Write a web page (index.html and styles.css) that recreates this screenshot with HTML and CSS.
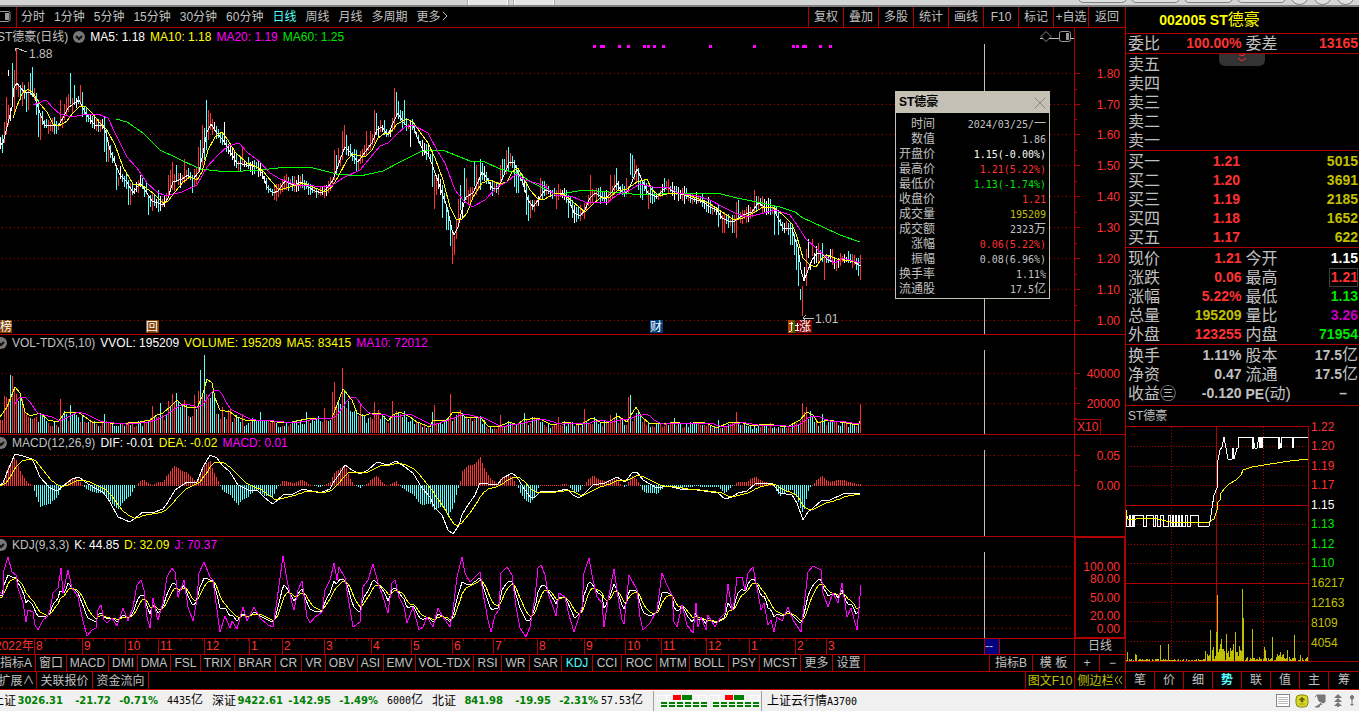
FILE: index.html
```html
<!DOCTYPE html>
<html lang="zh-CN">
<head>
    <meta charset="UTF-8">
    <title>ST德豪 002005</title>
    <link rel="stylesheet" href="styles.css">
</head>
<body>
<div class="app">
    <div class="titlebar">
        <span class="win-tab"></span><span class="win-tab"></span>
        <div class="win-buttons"><i></i><i></i><i></i><i></i><b></b><b></b><b></b></div>
    </div>

    <div class="workspace">
        <main class="left">
            <div class="toolbar">
                <svg class="dock-icon" width="17" height="20"><rect x="-3" y="4.5" width="13" height="10" rx="2" fill="none" stroke="#999"/><rect x="5" y="6" width="4" height="7" fill="#999"/></svg>
                <nav class="periods">
                    <button>分时</button><button>1分钟</button><button>5分钟</button><button>15分钟</button><button>30分钟</button><button>60分钟</button><button class="on">日线</button><button>周线</button><button>月线</button><button>多周期</button>
                    <button>更多<svg width="8" height="10"><path d="M2 1l4 4-4 4" fill="none" stroke="#c0c0c0"/></svg></button>
                </nav>
                <nav class="tools">
                    <button>复权</button><button>叠加</button><button>多股</button><button>统计</button><button>画线</button><button>F10</button><button>标记</button><button>+自选</button><button>返回</button>
                </nav>
            </div>

            <section class="panel">
                <div class="plot">
                    <div class="legend price-legend">
                        <span class="cut">ST德豪(日线)</span>
                        <svg class="fold" width="12" height="12"><circle cx="6" cy="6" r="6"/><path d="M3 5l3 3 3-3"/></svg>
                        <span class="white">MA5: 1.18</span><span class="yellow">MA10: 1.18</span><span class="magenta">MA20: 1.19</span><span class="green">MA60: 1.25</span>
                        <svg class="pin" width="34" height="12"><path d="M0 7.500h34" stroke="#c0c0c0"/><path d="M1 5.500l5-5 5 5-5 5z" fill="#000" stroke="#888"/><rect x="19.500" y=".5" width="11" height="10" rx="2" fill="#000" stroke="#999"/><rect x="26" y="2" width="3" height="7" fill="#999"/></svg>
                    </div>
                    <svg class="chart" id="price"></svg>
                </div>
                <div class="axis"><svg class="chart" id="priceAxis"></svg></div>
            </section>

            <section class="panel">
                <div class="plot">
                    <div class="legend">
                        <svg class="fold" width="7" height="12"><circle cx="1" cy="6" r="6"/><path d="M-2 5l3 3 3-3"/></svg>
                        <span>VOL-TDX(5,10)</span><span class="white">VVOL: 195209</span><span class="yellow">VOLUME: 195209</span><span class="yellow">MA5: 83415</span><span class="magenta">MA10: 72012</span>
                    </div>
                    <svg class="chart" id="vol"></svg>
                </div>
                <div class="axis"><svg class="chart" id="volAxis"></svg></div>
            </section>

            <section class="panel">
                <div class="plot">
                    <div class="legend">
                        <svg class="fold" width="7" height="12"><circle cx="1" cy="6" r="6"/><path d="M-2 5l3 3 3-3"/></svg>
                        <span>MACD(12,26,9)</span><span class="white">DIF: -0.01</span><span class="yellow">DEA: -0.02</span><span class="magenta">MACD: 0.01</span>
                    </div>
                    <svg class="chart" id="macd"></svg>
                </div>
                <div class="axis"><svg class="chart" id="macdAxis"></svg></div>
            </section>

            <section class="panel">
                <div class="plot">
                    <div class="legend">
                        <svg class="fold" width="7" height="12"><circle cx="1" cy="6" r="6"/><path d="M-2 5l3 3 3-3"/></svg>
                        <span>KDJ(9,3,3)</span><span class="white">K: 44.85</span><span class="yellow">D: 32.09</span><span class="magenta">J: 70.37</span>
                    </div>
                    <svg class="chart" id="kdj"></svg>
                </div>
                <div class="axis active"><svg class="chart" id="kdjAxis"></svg></div>
            </section>

            <div class="timeline">
                <div class="months">
                    <span class="year">2022年</span><span>8</span><span>9</span><span>10</span><span>11</span><span>12</span><span>1</span><span>2</span><span>3</span><span>4</span><span>5</span><span>6</span><span>7</span><span>8</span><span>9</span><span>10</span><span>11</span><span>12</span><span>1</span><span>2</span><span>3</span>
                    <b class="cursor-date">--</b>
                </div>
                <button class="unit">日线</button>
            </div>

            <div class="row indicators">
                <nav class="ind-list">
                    <button class="cut">指标A</button><button>窗口</button><button>MACD</button><button>DMI</button><button>DMA</button><button>FSL</button><button>TRIX</button><button>BRAR</button><button>CR</button><button>VR</button><button>OBV</button><button>ASI</button><button>EMV</button><button>VOL-TDX</button><button>RSI</button><button>WR</button><button>SAR</button><button class="on">KDJ</button><button>CCI</button><button>ROC</button><button>MTM</button><button>BOLL</button><button>PSY</button><button>MCST</button><button>更多</button><button>设置</button>
                </nav>
                <nav class="ind-right"><button>指标B</button><button>模 板</button><button>+</button><button>−</button></nav>
            </div>
            <div class="row extras">
                <nav class="ext-list"><button class="cut">扩展∧</button><button>关联报价</button><button>资金流向</button></nav>
                <nav class="ext-right"><button>图文F10</button><button>侧边栏<svg width="9" height="10"><path d="M4 1L1 5l3 4M8 1L5 5l3 4" fill="none" stroke="#c0c000"/></svg></button></nav>
            </div>
        </main>

        <aside class="side">
            <h1>002005 ST<em>德豪</em></h1>
            <table class="quote single">
                <tr><th>委比</th><td class="red">100.00%</td><th>委差</th><td class="red">13165</td></tr>
            </table>
            <div class="asks">
                <button class="expand" aria-label="展开"><svg width="10" height="9"><path d="M2 1h2l1 1 1-1h2M1 4l4 3 4-3" fill="none" stroke="#ff3232"/></svg></button>
                <table class="quote">
                    <tr><th>卖五</th><td></td><td></td></tr>
                    <tr><th>卖四</th><td></td><td></td></tr>
                    <tr><th>卖三</th><td></td><td></td></tr>
                    <tr><th>卖二</th><td></td><td></td></tr>
                    <tr><th>卖一</th><td></td><td></td></tr>
                </table>
            </div>
            <table class="quote bids">
                <tr><th>买一</th><td class="red">1.21</td><td class="gold">5015</td></tr>
                <tr><th>买二</th><td class="red">1.20</td><td class="gold">3691</td></tr>
                <tr><th>买三</th><td class="red">1.19</td><td class="gold">2185</td></tr>
                <tr><th>买四</th><td class="red">1.18</td><td class="gold">1652</td></tr>
                <tr><th>买五</th><td class="red">1.17</td><td class="gold">622</td></tr>
            </table>
            <table class="quote">
                <tr><th>现价</th><td class="red">1.21</td><th>今开</th><td class="white">1.15</td></tr>
                <tr><th>涨跌</th><td class="red">0.06</td><th>最高</th><td class="red"><span class="boxed">1.21</span></td></tr>
                <tr><th>涨幅</th><td class="red">5.22%</td><th>最低</th><td class="green">1.13</td></tr>
                <tr><th>总量</th><td class="gold">195209</td><th>量比</th><td class="purple">3.26</td></tr>
                <tr><th>外盘</th><td class="red">123255</td><th>内盘</th><td class="green">71954</td></tr>
            </table>
            <table class="quote last">
                <tr><th>换手</th><td>1.11%</td><th>股本</th><td>17.5<em>亿</em></td></tr>
                <tr><th>净资</th><td>0.47</td><th>流通</th><td>17.5<em>亿</em></td></tr>
                <tr><th>收益㊂</th><td>-0.120</th><th><b>PE</b>(动)</th><td class="none">–</td></tr>
            </table>
            <div class="mini-title">ST德豪</div>
            <svg class="chart mini" id="mini"></svg>
            <nav class="side-tabs"><button>笔</button><button>价</button><button>细</button><button class="on">势</button><button>联</button><button>值</button><button>主</button><button>筹</button></nav>
        </aside>

        <div class="tip">
            <header><b>ST德豪</b><button aria-label="关闭"><svg width="12" height="12"><path d="M.5.5l11 11M11.500.5l-11 11" stroke="#888"/></svg></button></header>
            <table>
                <tr><th>时间</th><td>2024/03/25/<em>一</em></td></tr>
                <tr><th>数值</th><td>1.86</td></tr>
                <tr><th>开盘价</th><td class="white">1.15(-0.00%)</td></tr>
                <tr><th>最高价</th><td class="red">1.21(5.22%)</td></tr>
                <tr><th>最低价</th><td class="green">1.13(-1.74%)</td></tr>
                <tr><th>收盘价</th><td class="red">1.21</td></tr>
                <tr><th>成交量</th><td class="gold">195209</td></tr>
                <tr><th>成交额</th><td>2323<em>万</em></td></tr>
                <tr><th>涨幅</th><td class="red">0.06(5.22%)</td></tr>
                <tr><th>振幅</th><td>0.08(6.96%)</td></tr>
                <tr><th>换手率</th><td>1.11%</td></tr>
                <tr><th>流通股</th><td>17.5<em>亿</em></td></tr>
            </table>
        </div>
    </div>

    <footer class="status">
        <div class="index first"><span>上证</span><b>3026.31</b><b>-21.72</b><b>-0.71%</b><span class="amt">4435<em>亿</em></span></div>
        <div class="index"><span>深证</span><b>9422.61</b><b>-142.95</b><b>-1.49%</b><span class="amt">6000<em>亿</em></span></div>
        <div class="index"><span>北证</span><b>841.98</b><b>-19.95</b><b>-2.31%</b><span class="amt">57.53<em>亿</em></span></div>
        <svg class="lights" width="109" height="20">
            <g id="light">
                <rect x="3.500" y="4.500" width="49" height="5" fill="#f0f0f0" stroke="#fff"/>
                <path d="M12.500 4v6M44.500 4v6" stroke="#fff"/>
                <rect x="19" y="4" width="8" height="5" fill="#f00"/><rect x="28" y="4" width="10" height="5" fill="#008000"/>
                <path d="M7 12h46M7 15h46" stroke="#008000" stroke-width="2" stroke-dasharray="6 2"/>
            </g>
            <use href="#light" x="52"/>
        </svg>
        <span class="server">上证云行情<em>A3700</em></span>
        <div class="tray">
            <svg width="14" height="14"><rect x=".5" y=".5" width="13" height="12" fill="#fff" stroke="#888"/><path d="M2 3.500h10M2 5.500h10M2 7.500h10M2 9.500h10" stroke="#bbb"/></svg>
            <svg width="14" height="14"><rect x="1" y="1" width="12" height="12" rx="4" fill="#d8d830" stroke="#880"/><path d="M7 3l3 3H8v2H6V6H4zM4 10h6" fill="#660" stroke="#660" stroke-width=".5"/></svg>
            <svg width="14" height="14"><path d="M3 1h8v7l-2 1-4-2zM6 9l2 2M1 13h4l2-4M3 1L1 3" fill="#777" stroke="#777"/></svg>
            <svg width="10" height="14"><path d="M5 0l4 4H1zM5 4l4 4H1zM5 8l4 4H1zM4 11h2v2H4z" fill="#777"/></svg>
            <svg width="8" height="14"><path d="M4 1l2 2-2 3-2-3zM4 6v3M3 10h2v1H3z" fill="#777" stroke="#777"/></svg>
        </div>
    </footer>
</div>
<script src="script.js"></script>
</body>
</html>
```
FILE: styles.css
```css
* {
    box-sizing: border-box;
}

body {
    margin: 0;
    background: #000;
    color: #c0c0c0;
    font: 12px/15px "Liberation Sans", "Noto Sans CJK SC", sans-serif;
    overflow: hidden;
}

button {
    padding: 0;
    border: 0;
    background: none;
    color: inherit;
    font: inherit;
    white-space: nowrap;
    cursor: pointer;
}

em { font-style: normal; }
.white { color: #fff; }
.yellow { color: #ff0; }
.magenta { color: #f0f; }
.green { color: #00e600; }
.red { color: #ff3232; }
.gold { color: #c0c000; }
.purple { color: #c000c0; }
.on { color: #54ffff; }

.app {
    display: flex;
    flex-direction: column;
    height: 100vh;
}

/* 顶部窗口边 */
.titlebar {
    display: flex;
    flex: none;
    gap: 6px;
    height: 7px;
    padding-left: 468px;
    overflow: hidden;
    background: #d4d4d4;
    border-bottom: 2px solid #808080;
}

.win-tab {
    width: 40px;
    background: #e4e4e4;
    border: solid #fff;
    border-width: 0 1px;
    outline: 1px solid #aaa;
}

.win-buttons {
    display: flex;
    gap: 4px;
    margin: -14px 4px 0 auto;
}

.win-buttons i, .win-buttons b {
    width: 49px;
    height: 17px;
    border: 1px solid #808080;
    border-radius: 5px;
    background: #e0e0e0;
}

.win-buttons b {
    width: 19px;
    height: 19px;
    border-radius: 50%;
}

.workspace {
    position: relative;
    display: grid;
    grid-template-columns: minmax(0, 1fr) 234px;
    grid-template-rows: minmax(0, 1fr);
    flex: 1;
    min-height: 0;
}

.left {
    display: grid;
    grid-template-rows: 21px minmax(0, 1fr) 100px 102px 102px 16px 17px 18px;
    min-width: 0;
}

.left > * {
    border-bottom: 1px solid #b00000;
}

.toolbar {
    display: flex;
    line-height: 20px;
}

.dock-icon { border-right: 1px solid #b00000; }

.periods {
    display: flex;
    gap: 9px;
    padding-left: 4px;
}

.tools {
    display: flex;
    margin-left: auto;
}

.tools button {
    width: 35px;
    border-left: 1px solid #b00000;
}

.tools button:last-child { width: 37px; }

/* 图表面板 */
.panel {
    display: grid;
    grid-template-columns: minmax(0, 1fr) 51px;
    grid-template-rows: minmax(0, 1fr);
    min-height: 0;
}

.plot {
    display: flex;
    flex-direction: column;
    min-width: 0;
    min-height: 0;
}

.legend {
    display: flex;
    flex: none;
    align-items: center;
    gap: 5px;
    height: 16px;
    white-space: nowrap;
}

.price-legend { height: 18px; }
.cut { margin-left: -3px; }
.fold circle { fill: #777; }
.fold path { fill: none; stroke: #111; stroke-width: 2; }
.pin { margin-left: auto; }

.axis {
    display: flex;
    min-height: 0;
    border-left: 1px solid #b00000;
}

.axis.active {
    margin: -1px -1px -1px 0;
    border: 2px solid #b00000;
}

.chart {
    display: block;
    flex: 1;
    width: 100%;
    min-width: 0;
    min-height: 0;
    overflow: visible;
    shape-rendering: crispEdges;
}

.chart polyline, .chart path { fill: none; stroke-width: 1; }
.chart text { font-size: 12px; fill: #ff3232; }
.s-white { stroke: #fff; }
.s-yellow { stroke: #ff0; }
.s-magenta { stroke: #f0f; }
.s-green { stroke: #0f0; }
.s-up { stroke: #ff3232; }
.s-down { stroke: #54ffff; }
.s-gold { stroke: #c0c000; }
.s-frame { stroke: #b00000; }
.s-grid { stroke: #b00000; stroke-dasharray: 1 3; }
.s-dense { stroke: #b00000; stroke-dasharray: 1 1; }
.s-dots { stroke: #b00000; stroke-dasharray: 1 2; }
.s-cross { stroke: #c0c0c0; }
.chart .t-white { fill: #fff; }
.chart .t-green { fill: #00e600; }
.chart .t-gold { fill: #c0c000; }
.chart .t-grey { fill: #c0c0c0; }

.timeline {
    display: grid;
    grid-template-columns: minmax(0, 1fr) 51px;
}

.months {
    position: relative;
    display: grid;
    grid-template-columns: 34px 48px 43px 33px 46px 45px 33px 42px 47px 40px 41px 41px 44px 47px 41px 36px 45px 43px 46px 31px 1fr;
    color: #ff3232;
}

.months span {
    padding-left: 1px;
    border-left: 1px solid #b00000;
    background: repeating-linear-gradient(90deg, transparent 0 10px, #b00000 10px 11px) 0 0 / 100% 2px no-repeat;
    white-space: nowrap;
}

.months span:nth-child(21) { background: none; }

.months .year {
    margin-left: -5px;
    padding-left: 0;
    border: 0;
    background: none;
}

.cursor-date {
    position: absolute;
    top: 0;
    left: 984px;
    width: 16px;
    height: 15px;
    border: solid #b00000;
    border-width: 0 1px;
    background: #000080;
    color: #c0c0c0;
    font-weight: normal;
}

.unit { border-left: 1px solid #b00000; }

.row {
    display: flex;
    justify-content: space-between;
}

.row nav { display: grid; line-height: 16px; }
.row nav button { border-right: 1px solid #b00000; }
.row .ind-list { grid-template-columns: 36px 31px 42px 29px 33px 30px 34px 41px 26px 24px 32px 26px 32px 58px 28px 28px 32px 31px 29px 35px 33px 39px 31px 41px 32px 32px; }
.row .ind-right { grid-template-columns: 43px 42px 25px 25px; border-left: 1px solid #b00000; }
.row .ext-list { grid-template-columns: 37px 56px 56px; }
.row .ext-right { grid-template-columns: 49px 50px; border-left: 1px solid #b00000; color: #c0c000; }
.row nav.ind-right button:last-child, .row nav.ext-right button:last-child { border-right: 0; }

/* 右侧行情 */
.side {
    display: flex;
    flex-direction: column;
    min-width: 0;
    border-left: 1px solid #b00000;
    border-bottom: 1px solid #b00000;
}

.side > * { flex: none; }

.side h1 {
    height: 27px;
    margin: 0;
    padding: 0 66px 0 0;
    border-bottom: 1px solid #b00000;
    color: #ff0;
    font-size: 14px;
    line-height: 26px;
    text-align: center;
}

.side h1 em { font-size: 16px; font-weight: normal; }

.quote {
    width: 100%;
    table-layout: fixed;
    border-collapse: separate;
    border-spacing: 0;
    padding-top: 1px;
    border-bottom: 1px solid #b00000;
    line-height: 19px;
}

.quote th, .quote td { padding: 0; height: 19px; vertical-align: middle; white-space: nowrap; }
.quote th { width: 44px; padding-left: 2px; font-size: 16px; font-weight: normal; text-align: left; }
.quote td { padding-right: 1px; font-size: 14px; font-weight: bold; text-align: right; }
.quote td em { font-size: 16px; font-weight: normal; line-height: 16px; }
.quote th b { font-size: 14px; line-height: 16px; }
.quote th:nth-child(3) { padding-left: 3px; }
.asks td:nth-child(2), .bids td:nth-child(2) { width: 71px; }
.quote.single { padding-top: 0; }
.quote.last { height: 61px; padding-bottom: 2px; }
.quote td.none { padding-right: 12px; }
.boxed { display: inline-block; padding-left: 2px; outline: 1px solid #404040; outline-offset: -1px; }
.asks { position: relative; }

.expand {
    position: absolute;
    top: 0;
    left: 93px;
    display: flex;
    justify-content: center;
    width: 46px;
    height: 12px;
    border-radius: 0 0 6px 6px;
    background: #333;
}

.mini-title { height: 20px; padding-left: 2px; line-height: 20px; }
.side .mini { flex: 1; }

.side-tabs {
    display: grid;
    grid-template-columns: repeat(7, 29px) 1fr;
    height: 18px;
    border-top: 1px solid #b00000;
    line-height: 17px;
}

.side-tabs button { border-right: 1px solid #b00000; }
.side-tabs button:last-child { border: 0; }
.side-tabs .on { font-weight: bold; }

/* 十字光标浮窗 */
.tip {
    position: absolute;
    top: 84px;
    right: 309px;
    width: 155px;
    padding-bottom: 1px;
    border: 1px solid #c4c0b4;
    background: #000;
}

.tip header {
    display: flex;
    align-items: center;
    justify-content: space-between;
    height: 21px;
    margin-bottom: 4px;
    padding: 0 3px;
    background: #c4c0b4;
    color: #000;
}

.tip button { height: 12px; line-height: 12px; }
.tip table { width: 100%; border-spacing: 0; line-height: 15px; }
.tip th, .tip td { height: 15px; padding: 0; text-align: right; }
.tip th { width: 39px; font-weight: normal; }
.tip td { padding-right: 3px; font-family: "DejaVu Sans Mono", "Noto Sans CJK SC", monospace; font-size: 10px; }
.tip td em { font-family: "Noto Sans CJK SC", sans-serif; font-size: 12px; line-height: 12px; }

.status {
    display: flex;
    flex: none;
    height: 21px;
    overflow: hidden;
    border-top: 1px solid #fff;
    background: #f0f0f0;
    color: #000;
    line-height: 20px;
    white-space: nowrap;
}

.index {
    display: grid;
    grid-template-columns: 24px 47px 48px 47px 45px;
    width: 220px;
    text-align: right;
}

.index.first { margin-left: -8px; }
.index b { color: #008000; font: bold 10px/20px "DejaVu Sans", sans-serif; }
.amt, .server em { font-family: "DejaVu Sans Mono", monospace; font-size: 10px; }
.amt em { font-family: "Noto Sans CJK SC", sans-serif; font-size: 12px; line-height: 12px; }
.lights { flex: none; margin-left: 1px; border: solid #a0a0a0; border-width: 0 1px; shape-rendering: crispEdges; }
.server { padding-left: 5px; }

.tray {
    display: flex;
    align-items: center;
    gap: 5px;
    margin-left: auto;
    padding-right: 3px;
}
```
FILE: script.js
```js
const NS = 'http://www.w3.org/2000/svg';

// 走势关键点: "x,y x,y ..."
const MA5 = '0,145 3,143 7,127 12,107 14,88 17,83 20,87 25,93 30,92 35,98 40,113 45,126 52,125 58,126 63,118 68,108 73,104 79,100 83,108 88,117 95,125 103,125 106,133 110,150 115,163 120,175 127,182 133,193 140,183 145,190 152,201 158,203 163,205 168,198 173,182 182,179 188,175 193,179 199,172 203,153 207,132 211,124 217,133 225,143 232,155 237,163 247,165 257,167 262,173 267,187 273,193 278,191 285,181 293,185 302,182 308,187 315,191 322,193 328,187 333,180 340,160 345,147 350,152 358,162 365,152 372,143 377,130 382,127 388,135 393,123 398,113 403,122 408,127 413,125 417,137 423,150 428,154 433,167 440,187 447,207 452,230 454,235 458,227 462,210 466,197 473,193 478,182 482,172 487,178 492,188 498,189 503,177 509,163 514,162 518,173 523,183 528,200 533,207 538,200 545,190 553,193 563,193 570,203 574,213 580,216 585,210 590,198 595,193 605,199 612,192 617,183 622,192 627,192 632,182 637,169 642,180 648,193 657,197 663,190 668,187 675,193 685,195 693,199 703,202 710,207 717,210 722,218 730,222 735,221 743,215 752,212 758,203 765,207 773,207 778,218 783,228 792,229 795,239 798,247 801,270 804,281 808,270 812,260 817,253 822,254 828,260 835,263 843,258 852,261 861,266';
const MA10 = '13,118 17,106 22,94 28,89 33,93 40,104 47,112 53,124 59,126 67,121 73,113 80,106 85,106 92,113 100,123 107,130 115,145 123,167 133,184 143,186 153,193 163,203 168,201 175,192 183,182 190,177 197,180 202,172 208,150 215,137 222,132 228,140 235,152 247,163 257,167 263,171 272,182 279,190 290,187 303,183 313,187 325,192 332,187 338,177 347,160 353,154 365,157 372,150 378,138 385,133 390,133 397,124 407,119 413,122 420,132 428,143 435,158 443,180 450,207 456,219 462,219 467,213 473,197 482,183 490,180 500,184 507,182 512,172 518,168 523,177 530,190 538,199 545,199 555,193 565,195 573,202 585,212 592,205 600,198 610,197 617,191 627,189 637,182 647,179 652,190 660,196 670,193 683,194 697,198 710,204 722,212 734,220 743,218 753,213 763,207 773,207 783,215 792,224 797,237 803,258 810,265 816,267 822,258 827,255 837,259 850,261 860,263';
const MA20 = '33,105 46,100 53,108 60,114 72,117 82,115 98,114 108,118 115,133 127,157 137,168 147,183 157,192 166,196 182,192 197,185 207,167 217,156 228,146 239,143 247,152 260,162 270,173 280,179 297,185 330,187 343,178 360,170 370,158 380,146 388,143 397,134 405,127 413,125 428,133 438,152 445,163 455,190 463,200 472,207 485,200 497,187 507,182 516,174 525,180 543,185 555,195 573,197 585,202 607,203 617,195 630,190 640,184 657,188 668,187 678,193 697,196 710,200 723,207 735,213 747,217 760,214 775,210 790,215 797,225 806,239 817,249 825,256 835,263 843,258 860,263';
const MA60 = '116,119 127,122 143,133 160,150 177,158 200,169 227,172 260,170 287,167 313,168 337,174 360,176 383,171 400,162 420,152 430,150 445,151 470,161 485,162 500,169 517,173 533,183 553,193 567,193 583,190 597,191 620,193 643,195 673,193 717,193 737,198 757,202 780,207 795,212 803,218 823,227 840,235 860,242';
const VMA5 = '0,417 7,407 15,387 20,393 25,412 30,416 40,413 48,420 58,422 65,412 78,412 85,417 92,422 103,422 117,424 140,422 150,420 157,415 163,413 170,407 177,400 182,405 187,407 197,408 202,397 207,379 212,383 215,398 220,410 230,412 237,417 245,420 263,420 277,422 293,422 310,418 332,418 337,405 343,389 352,400 357,413 363,416 372,413 380,413 388,421 393,415 400,412 410,417 417,422 430,427 433,420 447,420 452,413 460,412 465,417 480,417 488,426 497,427 510,422 517,425 523,420 538,418 550,424 557,424 567,422 580,425 592,418 600,422 607,423 618,416 627,422 630,417 636,407 642,417 650,424 670,423 677,422 683,424 703,422 717,428 730,422 740,422 752,426 767,424 787,427 800,420 807,412 813,415 818,423 827,420 840,422 858,425 860,421';
const DIF = '0,485 3,483 8,470 15,454 23,456 32,459 35,465 40,477 50,488 57,491 63,486 72,479 79,477 85,482 95,488 103,492 110,502 118,517 130,522 143,512 152,513 163,509 168,502 175,490 187,482 197,482 203,467 210,455 217,458 222,465 230,472 238,485 248,490 257,490 265,498 273,504 283,495 293,494 303,489 320,493 330,489 333,483 340,473 345,465 352,470 360,474 368,470 377,462 388,465 396,461 405,467 413,473 422,488 430,497 435,508 442,515 448,530 453,534 459,525 462,515 468,505 475,495 480,483 488,484 497,485 503,478 512,473 517,477 523,487 530,497 535,497 540,492 558,491 567,489 573,495 579,498 585,493 593,485 605,483 617,477 625,482 632,473 637,472 643,480 657,488 668,486 680,489 697,490 718,493 725,499 732,497 738,493 747,491 755,484 772,483 780,493 792,495 797,503 803,520 808,512 813,508 822,500 830,500 843,494 860,493';
const J = '0,592 3,595 4,570 8,557 12,572 16,575 18,588 23,603 26,622 28,610 33,612 35,625 38,630 43,620 47,617 50,610 53,593 58,588 61,568 63,593 68,570 72,588 78,597 82,617 87,636 92,630 96,628 98,610 101,605 104,620 107,623 112,618 117,626 123,608 128,621 133,607 137,585 141,580 144,590 147,617 150,628 153,598 157,617 158,620 163,603 167,577 172,568 175,572 178,597 184,580 188,607 193,621 197,600 199,573 204,562 210,577 213,580 216,603 220,632 225,616 230,628 232,621 237,629 243,607 247,621 254,607 260,618 268,625 273,627 277,600 283,556 287,580 292,603 294,610 298,590 302,581 307,617 310,623 315,617 322,612 325,590 330,580 334,563 337,580 339,567 345,578 349,603 353,627 360,622 363,587 368,580 373,564 378,583 383,597 388,613 392,583 395,580 399,597 404,607 407,623 413,607 419,630 423,627 427,617 433,627 438,608 443,617 450,627 453,610 457,577 462,557 465,573 470,582 480,572 483,593 488,620 491,632 495,615 499,610 501,573 507,567 512,575 516,607 520,628 526,637 530,627 535,597 538,568 541,565 545,575 548,593 553,607 556,616 559,593 565,597 569,615 574,632 578,620 582,607 584,573 589,558 593,580 597,597 602,603 604,627 608,600 614,569 618,597 622,620 624,624 629,575 637,590 640,617 643,630 650,623 657,610 662,573 667,585 672,595 674,622 677,627 682,605 687,625 693,633 696,603 698,627 701,617 706,630 708,615 715,627 720,618 725,613 728,584 732,610 734,603 737,577 742,577 745,590 748,573 753,567 758,593 761,610 764,603 768,625 771,620 774,632 777,617 782,621 788,607 793,620 801,632 805,597 808,572 813,566 821,570 823,593 828,607 833,593 838,603 842,583 847,617 851,608 857,630 861,585';

// 长影线: x 上 下 颜色，其余按均线取
const SPIKES = '2 135 153 c,4 122 143 r,6 97 134 r,8 105 125 r,12 63 97 c,14 70 115 r,16 48 90 r,18 85 97 r,20 85 100 c,22 82 106 r,26 93 112 c,28 82 110 r,30 73 95 c,32 67 97 c,34 88 100 r,36 93 115 c,38 100 137 c,40 113 140 r,60 100 123 r,64 104 120 r,66 97 115 r,68 94 112 r,70 73 104 c,74 85 105 c,80 85 105 r,82 92 117 c,104 117 152 c,106 130 162 c,108 140 162 r,116 165 190 c,118 177 186 r,128 180 205 c,130 183 205 r,148 195 215 c,152 193 211 r,158 190 212 c,168 175 197 r,170 170 192 r,172 162 190 r,176 165 182 c,184 159 183 r,192 175 193 c,198 147 172 r,200 140 170 c,202 125 165 r,204 128 160 c,206 100 150 c,208 110 140 r,210 113 130 r,212 119 135 r,224 122 145 w,242 147 165 r,334 150 180 r,336 155 175 c,338 148 167 r,342 131 160 r,344 125 150 r,346 135 155 c,356 150 172 c,366 131 155 r,370 131 150 r,374 110 143 r,376 113 135 c,384 120 135 c,394 88 130 r,396 92 115 c,398 101 119 c,404 100 125 c,410 120 147 w,432 150 187 c,434 175 209 r,436 178 195 r,442 185 218 c,446 205 230 c,448 210 230 c,450 220 246 c,452 233 264 r,454 236 255 r,456 220 239 r,458 199 225 r,460 185 210 c,464 168 200 c,466 178 200 r,474 162 186 c,476 165 195 r,480 159 190 c,482 163 180 c,500 165 185 r,502 159 180 c,504 159 175 c,506 150 174 r,508 147 170 c,510 153 166 r,512 156 168 c,514 160 187 c,516 165 193 c,518 168 193 c,526 185 215 c,528 195 221 c,530 200 218 r,540 178 200 r,542 181 200 c,544 181 196 c,556 190 209 r,558 184 200 r,568 195 218 c,572 200 218 c,574 205 223 w,580 205 221 r,590 175 205 r,610 175 200 r,614 175 195 r,616 168 190 c,626 178 195 r,630 153 175 c,632 155 178 c,634 159 180 r,636 165 182 r,638 168 190 c,640 180 198 c,642 182 200 c,648 190 209 r,664 178 192 c,718 205 227 c,722 215 233 r,724 212 233 r,732 215 233 c,734 215 233 r,736 202 238 r,738 200 220 c,754 190 213 r,756 196 212 c,762 196 213 r,774 205 235 c,778 210 235 c,790 222 245 c,792 225 245 c,794 234 255 c,796 240 270 c,798 255 286 c,800 289 300 c,802 286 316 r,804 267 281 w,806 249 286 r,808 239 258 w,812 239 256 r,818 243 262 r,822 243 262 c,824 255 280 r,830 249 262 w,832 249 265 r,856 258 270 c,858 258 276 c,860 255 280 r';
const VOL_SPIKES = '4 396 r,6 397 r,8 399 r,10 403 c,11 375 c,13 376 r,15 390 r,60 399 r,70 405 c,104 414 c,153 406 r,161 403 c,168 401 r,172 394 r,176 393 c,184 400 r,194 395 r,199 391 r,201 370 c,205 355 c,207 394 r,211 398 c,222 407 r,242 414 r,261 412 c,306 412 c,325 408 r,333 392 r,335 382 r,339 402 c,343 368 r,345 392 c,360 403 r,374 402 r,393 401 r,432 412 c,434 405 r,451 394 r,500 415 r,525 413 c,558 417 r,585 409 r,610 415 r,616 413 c,629 397 r,631 395 c,641 414 c,674 418 c,719 420 c,736 412 r,802 403 r,804 412 r,806 407 r,823 414 c,860 404 r';

// 固定种子的随机数，保证每次画出来一样
let seed = 7;
function rnd() {
    seed = (seed * 16807) % 2147483647;
    return seed / 2147483647;
}

function parse(str) {
    return str.split(' ').map(p => p.split(',').map(Number));
}

function at(pts, x) {
    let i = 1;
    while (i < pts.length - 1 && pts[i][0] < x) i++;
    const [x0, y0] = pts[i - 1], [x1, y1] = pts[i];
    return y0 + (y1 - y0) * (x - x0) / (x1 - x0);
}

function add(g, tag, attrs, text) {
    const el = document.createElementNS(NS, tag);
    for (const k in attrs) el.setAttribute(k, attrs[k]);
    if (text !== undefined) el.textContent = text;
    g.appendChild(el);
    return el;
}

function layer(id, top, left) {
    return add(document.getElementById(id), 'g', {transform: `translate(${-(left || 0)},${-top})`});
}

function line(g, pts, cls) {
    const s = typeof pts === 'string' ? pts : pts.map(p => p.join(',')).join(' ');
    add(g, 'polyline', {points: s, class: cls});
}

function hline(g, y, cls) {
    add(g, 'line', {x1: 2, x2: '99.8%', y1: y + 0.5, y2: y + 0.5, class: cls});
}

function seg(g, x1, y1, x2, y2, cls) {
    add(g, 'line', {x1, y1, x2, y2, class: cls});
}

const COLOR = {r: 's-up', c: 's-down', w: 's-white'};

function bar(g, x, y1, y2, c) {
    seg(g, x + 0.5, y1, x + 0.5, y2, COLOR[c] || c);
}

function drawPrice() {
    const g = layer('price', 46);
    for (const y of [73, 104, 134, 165, 196, 227, 258, 289, 320]) hline(g, y, 's-grid');
    const ma = parse(MA5), spikes = {};
    SPIKES.split(',').forEach(s => {
        const [x, a, b, c] = s.split(' ');
        spikes[x] = [+a, +b, c];
    });
    for (let x = 0; x <= 860; x += 2) {
        if (spikes[x]) {
            bar(g, x, ...spikes[x]);
            continue;
        }
        const y = at(ma, x), slope = at(ma, x + 2) - at(ma, x - 2), r = rnd();
        const c = r < 0.3 ? 'w' : (r * 8 - 5 > slope ? 'r' : 'c');
        bar(g, x, Math.round(y - 2 - rnd() * 7), Math.round(y + 2 + rnd() * 7), c);
    }
    seg(g, 8.5, 70, 8.5, 76, 's-white');
    line(g, MA60, 's-green');
    line(g, MA5, 's-white');
    line(g, MA10, 's-yellow');
    line(g, MA20, 's-magenta');
    for (const x of [593, 600, 602, 618, 627, 643, 647, 653, 662, 709, 753, 792, 796, 802, 804, 819, 829]) {
        add(g, 'rect', {x, y: 45, width: 3, height: 3, fill: '#f0f'});
    }
    add(g, 'path', {d: 'M19 48h-4v3M16 48l11 4', class: 's-cross'});
    add(g, 'text', {x: 29, y: 58, class: 't-grey'}, '1.88');
    add(g, 'path', {d: 'M814 318h-11M806 315l-3 3 3 3', class: 's-cross'});
    add(g, 'text', {x: 815, y: 323, class: 't-grey'}, '1.01');
    // 事件标记
    [[0, 12, '#7f3f00', '榜'], [146, 13, '#7f3f00', '回'], [650, 13, '#003f7f', '财'], [788, 5, '#c04000', ''], [793, 3, '#008000', ''], [795, 17, '#7f0000', '']].forEach(([x, w, fill, t]) => {
        add(g, 'rect', {x, y: 320, width: w, height: 13, fill});
        add(g, 'text', {x, y: 331, class: 't-white'}, t);
    });
    add(g, 'path', {d: 'M789 323h4M791 322v9M791 331h-2M797 323v7M795 325h4M795 330h4', class: 's-white'});
    add(g, 'text', {x: 799, y: 331, class: 't-white'}, '涨');
    seg(g, 984.5, 44, 984.5, 334, 's-cross');

    const a = layer('priceAxis', 28, 1075);
    [73, 104, 134, 165, 196, 227, 258, 289, 320].forEach((y, i) => {
        seg(a, 1075, y + 0.5, 1080, y + 0.5, 's-frame');
        if (i) seg(a, 1075, y - 14.5, 1077, y - 14.5, 's-frame');
        add(a, 'text', {x: 1120, y: y + 5, 'text-anchor': 'end'}, (1.8 - i * 0.1).toFixed(2));
    });
}

function drawVol() {
    const g = layer('vol', 351);
    hline(g, 373, 's-grid');
    hline(g, 403, 's-grid');
    const ma = parse(VMA5), spikes = {};
    VOL_SPIKES.split(',').forEach(s => {
        const [x, y, c] = s.split(' ');
        spikes[x - x % 2] = [+y, c];
    });
    const ma10 = [];
    for (let x = 0; x <= 860; x += 2) {
        const s = spikes[x];
        const h = (433 - at(ma, x)) * (0.55 + rnd() * 0.6);
        bar(g, x, s ? s[0] : Math.round(433 - h), 433, s ? s[1] : (rnd() < 0.45 ? 'r' : 'c'));
        let sum = 0;
        for (let k = 0; k < 6; k++) sum += at(ma, Math.max(0, x - k * 3));
        if (x > 12) ma10.push([x, Math.round(sum / 6)]);
    }
    line(g, VMA5, 's-yellow');
    line(g, ma10, 's-magenta');
    seg(g, 984.5, 350, 984.5, 434, 's-cross');

    const a = layer('volAxis', 335, 1075);
    [[373, '40000'], [403, '20000']].forEach(([y, t]) => {
        seg(a, 1075, y + 0.5, 1080, y + 0.5, 's-frame');
        seg(a, 1075, y + 15.5, 1077, y + 15.5, 's-frame');
        add(a, 'text', {x: 1120, y: y + 5, 'text-anchor': 'end'}, t);
    });
    add(a, 'path', {d: 'M1075 419.5h25.500v14.500', class: 's-frame'});
    add(a, 'text', {x: 1077, y: 431}, 'X10');
}

function drawMacd() {
    const g = layer('macd', 451);
    hline(g, 455, 's-grid');
    hline(g, 485, 's-dense');
    const dif = parse(DIF), deaPts = [];
    let dea = 486;
    for (let x = 0; x <= 860; x += 2) {
        const d = at(dif, x);
        dea = dea * 0.8 + d * 0.2;
        deaPts.push([x, Math.round(dea)]);
        const h = Math.round((dea - d) * 2);
        if (h > 0) bar(g, x, 486 - h, 486, 'r');
        if (h < 0) bar(g, x, 485, 485 - h, 'c');
    }
    line(g, DIF, 's-white');
    line(g, deaPts, 's-yellow');
    seg(g, 984.5, 450, 984.5, 536, 's-cross');

    const a = layer('macdAxis', 435, 1075);
    seg(a, 1075, 470.5, 1077, 470.5, 's-frame');
    [[455, '0.05'], [485, '0.00']].forEach(([y, t]) => {
        seg(a, 1075, y + 0.5, 1080, y + 0.5, 's-frame');
        add(a, 'text', {x: 1120, y: y + 5, 'text-anchor': 'end'}, t);
    });
}

function drawKdj() {
    const g = layer('kdj', 553);
    const a = layer('kdjAxis', 538, 1076);
    [[566, '100.00'], [578, '80.00'], [597, '50.00'], [615, '20.00'], [628, '0.00']].forEach(([y, t]) => {
        hline(g, y, 's-grid');
        add(a, 'text', {x: 1120, y: y + 5, 'text-anchor': 'end'}, t);
    });
    // J = 3K - 2D，反推 K、D
    const j = parse(J), kPts = [], dPts = [];
    let d = 598;
    for (let x = 0; x <= 860; x += 2) {
        const v = at(j, x);
        d = (6 * d + v) / 7;
        dPts.push([x, Math.round(d)]);
        kPts.push([x, Math.round((v + 2 * d) / 3)]);
    }
    line(g, kPts, 's-white');
    line(g, dPts, 's-yellow');
    line(g, J, 's-magenta');
    seg(g, 984.5, 552, 984.5, 638, 's-cross');
}

function drawMini() {
    const g = layer('mini', 426, 1126);
    [446, 466, 485, 524, 544, 563, 602, 621, 641].forEach(y => seg(g, 1128, y + 0.5, 1308, y + 0.5, 's-dots'));
    seg(g, 1171.5, 427, 1171.5, 661, 's-dots');
    seg(g, 1263.5, 427, 1263.5, 661, 's-dots');
    add(g, 'path', {d: 'M1126 426.500h182.500v235M1126 505.500h182M1126 583.500h182M1216.500 426v235M1126 661.500h233', class: 's-frame'});

    let d = 'M1126.500 510V526', low = true;
    for (const x of [1129, 1130, 1132, 1133, 1134, 1143, 1146, 1153, 1155, 1157, 1160, 1163, 1168, 1170, 1172, 1173, 1175, 1176, 1178, 1179, 1181, 1182, 1185, 1187, 1190, 1198]) {
        low = !low;
        d += `H${x + 0.5}V${low ? 526.5 : 515.5}`;
    }
    d += 'H1209L1211 515L1214 495L1217 488V465L1220 450L1222 447L1224 437L1226 448L1228 459H1232L1233 448L1234 459L1237 448H1238L1239 437.500H1252V448H1253V437L1255 448H1257L1259 437L1260 448L1261 437L1262 448L1263 437.500H1278V448H1279V437L1281 448L1282 437.500H1292L1293 448L1294 437.500H1308';
    add(g, 'path', {d, class: 's-white'});
    line(g, '1126,512 1128,519 1132,520 1140,518 1158,519 1170,522 1209,522 1214,519 1217,510 1217,503 1220,500 1221,493 1225,488 1229,484 1236,480 1241,475 1243,470 1252,467 1270,464 1290,461 1308,459', 's-yellow');

    const big = {1127: 9, 1135: 7, 1136: 6, 1160: 16, 1168: 17, 1210: 31, 1213: 14, 1216: 29, 1217: 66, 1219: 12, 1220: 17, 1221: 22, 1226: 27, 1230: 13, 1233: 17, 1235: 29, 1239: 15, 1242: 72, 1243: 43, 1252: 32, 1264: 14, 1265: 11, 1272: 24, 1280: 9, 1287: 11, 1294: 26, 1300: 6};
    for (let x = 1126; x < 1308; x++) {
        const max = x < 1205 ? 2 : (x < 1242 ? 12 : (x > 1274 && x < 1285 ? 8 : 4));
        bar(g, x, 661 - (big[x] || Math.round(rnd() * max)), 661, 's-gold');
    }

    [['1.22', 427, 't-red'], ['1.20', 446, 't-red'], ['1.19', 466, 't-red'], ['1.17', 485, 't-red'], ['1.15', 505, 't-white'], ['1.13', 524, 't-green'], ['1.12', 544, 't-green'], ['1.10', 563, 't-green'], ['16217', 583, 't-gold'], ['12163', 603, 't-gold'], ['8109', 623, 't-gold'], ['4054', 643, 't-gold']].forEach(([t, y, cls]) => {
        add(g, 'text', {x: 1311, y: y + 4, class: cls}, t);
    });
}

drawPrice();
drawVol();
drawMacd();
drawKdj();
drawMini();
```
